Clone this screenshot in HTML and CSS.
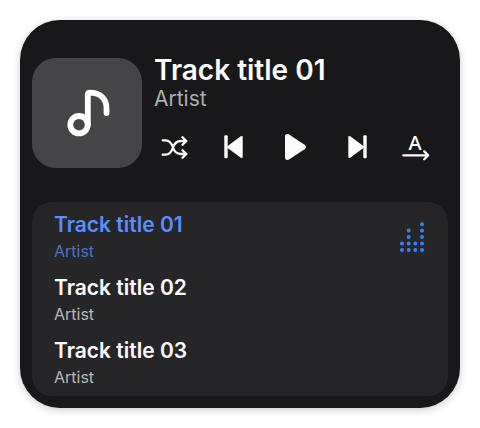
FILE: index.html
```html
<!DOCTYPE html>
<html lang="en">
<head>
<meta charset="utf-8">
<meta name="viewport" content="width=device-width, initial-scale=1">
<title>Music player</title>
<link rel="stylesheet" href="styles.css">
</head>
<body>
<main class="player">
  <section class="now">
    <div class="cover">
      <svg viewBox="0 0 110 110" aria-hidden="true">
        <circle cx="47" cy="66.7" r="8.7"/>
        <path d="M55.8 66.7V36.6Q55.8 34.7 58 34.7C69 34.7 74.5 42 74.5 50V55"/>
      </svg>
    </div>
    <div class="details">
      <h1 class="title">Track title 01</h1>
      <p class="artist">Artist</p>
      <div class="controls">
        <button class="control" type="button" aria-label="Shuffle">
          <svg class="line" viewBox="0 0 40 40"><path d="M8.7 13.3H11.5C16 13.3 17.7 16.5 19 20.5S22.500 27 27 27H32.200M8.700 27.700H11.500C16 27.700 17.700 24.500 19 20.500S22.500 14 27 14H32.200M28.500 10.200L32.400 14L28.500 17.800M28.500 23.200L32.400 27L28.500 30.800"/></svg>
        </button>
        <button class="control" type="button" aria-label="Previous">
          <svg class="solid" viewBox="0 0 40 40"><rect x="9.300" y="8.300" width="3.400" height="23" rx="1"/><path d="M13 18.700L25.800 9.300Q27.700 8.300 27.700 10.300V29.700Q27.700 31.700 25.800 30.700L13 21.300Q11.400 20 13 18.700Z"/></svg>
        </button>
        <button class="control" type="button" aria-label="Play">
          <svg class="solid" viewBox="0 0 40 40"><path d="M10 9.500C10 7.300 12 6.500 14 7.600L29.600 17.700Q32.400 20 29.600 22.300L14 32.400C12 33.500 10 32.700 10 30.500Z"/></svg>
        </button>
        <button class="control" type="button" aria-label="Next">
          <svg class="solid" viewBox="0 0 40 40"><rect x="27.300" y="8.300" width="3.400" height="23" rx="1"/><path d="M27 18.700L14.200 9.300Q12.300 8.300 12.300 10.300V29.700Q12.300 31.700 14.200 30.700L27 21.300Q28.600 20 27 18.700Z"/></svg>
        </button>
        <button class="control" type="button" aria-label="Play all in order">
          <svg class="line" viewBox="0 0 40 40"><text class="letter" x="19" y="23">A</text><path d="M7.300 28.300H32M28.200 24.400L32.200 28.300L28.200 32.200"/></svg>
        </button>
      </div>
    </div>
  </section>
  <ol class="queue">
    <li class="track current">
      <div>
        <h2 class="name">Track title 01</h2>
        <p class="by">Artist</p>
      </div>
      <svg class="levels" viewBox="0 0 28 32" aria-hidden="true">
        <path d="M4 29h0M4 22.500h0M10.700 29h0M10.700 22.500h0M10.700 16h0M10.700 9.600h0M17.300 29h0M17.300 22.500h0M24 29h0M24 22.500h0M24 16h0M24 9.600h0M24 3.300h0"/>
      </svg>
    </li>
    <li class="track">
      <div>
        <h2 class="name">Track title 02</h2>
        <p class="by">Artist</p>
      </div>
    </li>
    <li class="track">
      <div>
        <h2 class="name">Track title 03</h2>
        <p class="by">Artist</p>
      </div>
    </li>
  </ol>
</main>
</body>
</html>
```
FILE: styles.css
```css
* {
  box-sizing: border-box;
}

body,
h1,
h2,
p,
ol {
  margin: 0;
  padding: 0;
}

body {
  padding: 20px;
  background: #fff;
  font-family: Inter, "Liberation Sans", sans-serif;
}

.player {
  display: flex;
  flex-direction: column;
  gap: 34px;
  padding: 34px 12px 12px;
  border-radius: 40px;
  background: #18181a;
  box-shadow: 0 2px 8px rgba(0, 0, 0, 0.2);
  color: #fcfcff;
}

.now {
  display: flex;
  align-items: flex-end;
  gap: 12px;
}

.cover {
  flex: none;
  width: 110px;
  height: 110px;
  border-radius: 24px;
  background: #454547;
}

.cover svg {
  display: block;
  fill: none;
  stroke: #fff;
  stroke-width: 5.8;
  stroke-linecap: round;
  stroke-linejoin: round;
}

.details {
  flex: 1;
}

.title {
  font-size: 28px;
  font-weight: 600;
  line-height: 32px;
}

.artist {
  color: #aeaeb0;
  font-size: 21px;
  line-height: 26px;
}

.controls {
  display: flex;
  justify-content: space-between;
  margin: 14px 12px 0 0;
}

.control {
  width: 40px;
  height: 42px;
  padding: 0;
  border: 0;
  background: none;
  color: inherit;
  cursor: pointer;
}

.control svg {
  display: block;
  width: 40px;
  height: 40px;
}

.line {
  fill: none;
  stroke: currentColor;
  stroke-width: 2.3;
  stroke-linecap: round;
  stroke-linejoin: round;
}

.solid {
  fill: currentColor;
}

.letter {
  fill: currentColor;
  stroke: none;
  font-family: "Noto Sans", sans-serif;
  font-size: 20px;
  font-weight: 500;
  text-anchor: middle;
}

.queue {
  display: flex;
  flex-direction: column;
  gap: 11px;
  padding: 9px 20px 7px 22px;
  border-radius: 20px;
  background: #262628;
  list-style: none;
}

.track {
  display: flex;
  align-items: center;
  justify-content: space-between;
}

.name {
  font-size: 21px;
  font-weight: 600;
  line-height: 28px;
}

.by {
  color: #b8b8ba;
  font-size: 16px;
  line-height: 24px;
}

.current .name {
  color: #598eff;
}

.current .by {
  color: #4a72c4;
}

.levels {
  width: 28px;
  height: 32px;
  margin-right: 2px;
  fill: none;
  stroke: #3d7eff;
  stroke-width: 4;
  stroke-linecap: round;
}
```
